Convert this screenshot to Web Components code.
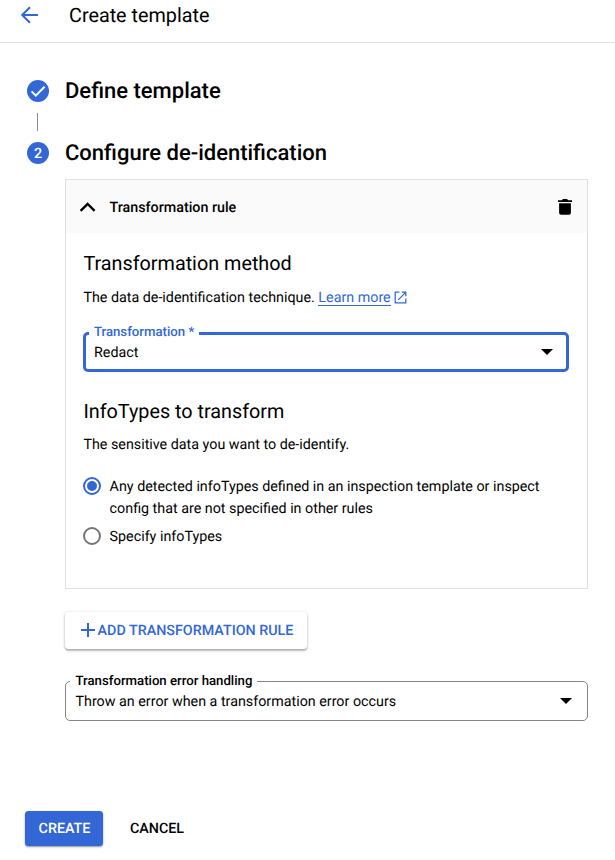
<!DOCTYPE html>
<html lang="en">
<head>
<meta charset="utf-8">
<title>Create template</title>
<style>
  html, body { margin: 0; height: 100%; background: #fff; }
  body {
    --blue: #3367d6;
    --line: #e0e0e0;
    font: 400 14.3px/22px Roboto, "Liberation Sans", sans-serif;
    color: #000;
    text-rendering: geometricPrecision;
    overflow: hidden;
  }
</style>
</head>
<body>
<template-page></template-page>
<script>
const define = (name, html) => {
  const tpl = document.createElement('template');
  tpl.innerHTML = html;
  customElements.define(name, class extends HTMLElement {
    constructor() {
      super();
      this.attachShadow({ mode: 'open' }).append(tpl.content.cloneNode(true));
    }
  });
};

define('page-header', `
<style>
  :host { display: flex; align-items: center; gap: 31px; box-sizing: border-box; height: 43px;
    padding: 0 20px 12px; border-bottom: 1px solid var(--line); font-size: 19.8px; line-height: 28px; }
  svg { width: 18px; height: 18px; display: block; }
  span { padding-top: 2px; }
</style>
<svg viewBox="0 0 18 18" fill="none" stroke="#3367d6" stroke-width="2"><path d="M18 9H2.2M10 1.2L2.2 9l7.8 7.8"/></svg>
<span><slot></slot></span>`);

define('step-heading', `
<style>
  :host { display: flex; align-items: center; height: 30px; gap: 16px; font-size: 22px; font-weight: 500; line-height: 28px; }
  .dot { width: 22px; height: 22px; border-radius: 50%; background: var(--blue); color: #fff;
    display: grid; place-items: center; font-size: 14.3px; line-height: 22px; flex: none; }
  .text { padding-top: 2px; }
</style>
<span class="dot"><slot name="mark"></slot></span><span class="text"><slot></slot></span>`);

define('rule-panel', `
<style>
  :host { display: block; box-sizing: border-box; border: 1px solid var(--line); height: 410px; }
  header { display: flex; align-items: center; height: 53px; background: #fafafa; padding: 0 15px 0 14px; box-sizing: border-box; font-weight: 500; }
  .chev { width: 16px; height: 10px; margin-right: 13.5px; }
  .bin { width: 14px; height: 16px; margin-left: auto; }
  .title { padding-top: 2px; }
  .body { padding: 18px 18px 0 17.4px; }
</style>
<header>
  <svg class="chev" viewBox="0 0 16 10" fill="none" stroke="#000" stroke-width="2.3"><path d="M.6 8.9L7.6 1.9l7 7"/></svg>
  <span class="title"><slot name="title"></slot></span>
  <svg class="bin" viewBox="0 0 14 16"><path d="M0 1.2h3.9L4.9 0h4.2l1 1.2H14V3H0zM1.1 4.3h11.8v9.4a2 2 0 0 1-2 2H3.1a2 2 0 0 1-2-2z"/></svg>
</header>
<div class="body"><slot></slot></div>`);

define('section-title', `
<style>:host { display: block; font-size: 19.8px; line-height: 26px; }</style><slot></slot>`);

define('doc-link', `
<style>
  :host { display: inline-flex; align-items: center; color: var(--blue); gap: 3px; height: 22px; vertical-align: top; }
  span { line-height: 16px; height: 15px; border-bottom: 1px solid var(--blue); }
  svg { width: 13px; height: 13px; margin-bottom: 2px; }
</style>
<span><slot></slot></span>
<svg viewBox="0 0 13 13" fill="none" stroke="#3367d6" stroke-width="1.25"><path d="M5.4 1.2H1.2v10.6h10.6V7.6M7.8 1.2h4v4M11.7 1.4L4.2 8.9"/></svg>`);

define('select-field', `
<style>
  :host { display: flex; position: relative; box-sizing: border-box; align-items: center; justify-content: space-between;
    height: 39.5px; border: 1px solid #80868b; border-radius: 5px; padding: 1px 15px 0 9.5px; }
  :host([focused]) { border: 3px solid var(--blue); padding: 0 13.5px 0 7.6px; }
  .label { position: absolute; left: 4px; top: -10px; height: 20px; line-height: 20px; padding: 0 4.5px 0 5.5px;
    background: #fff; font-size: 13.2px; font-weight: 500; white-space: nowrap; }
  :host([focused]) .label { left: 2.5px; top: -12px; color: var(--blue); padding: 0 5px; }
  .value { padding-top: 2px; line-height: 20px; }
  svg { width: 12px; height: 6px; }
</style>
<span class="label"><slot name="label"></slot></span>
<span class="value"><slot></slot></span>
<svg viewBox="0 0 12 6"><path d="M0 0h12L6 6z"/></svg>`);

define('radio-option', `
<style>
  :host { display: flex; gap: 8.6px; }
  i { width: 18px; height: 18px; margin: 1px 0 0 -.4px; box-sizing: border-box; border: 2px solid #757575; border-radius: 50%; flex: none; display: grid; place-items: center; }
  :host([checked]) i { border-color: var(--blue); }
  :host([checked]) i::after { content: ""; width: 10px; height: 10px; border-radius: 50%; background: var(--blue); }
</style>
<i></i><span><slot></slot></span>`);

define('push-button', `
<style>
  :host { display: inline-flex; align-items: center; justify-content: center; gap: 3px; box-sizing: border-box; border-radius: 3.5px;
    font-weight: 500; white-space: nowrap; height: 36px; }
  :host([kind=raised]) { color: var(--blue); background: #fff; padding-left: 2px; box-shadow: 0 1px 3px rgba(0,0,0,.27), 0 1.5px 1.5px rgba(0,0,0,.17); }
  :host([kind=primary]) { color: #fff; background: var(--blue); padding-left: 1px; box-shadow: 0 1px 2.5px rgba(0,0,0,.3), 0 1px 1px rgba(0,0,0,.15); }
  :host([kind=raised]) .text, :host([kind=primary]) .text { padding-top: 2px; }
</style>
<slot name="icon"></slot><span class="text"><slot></slot></span>`);

define('template-page', `
<style>
  :host { display: block; width: 615px; height: 860px; }
  .steps { padding: 33px 27px 0; }
  .connector { width: 1px; height: 18px; margin: 7px 0 7px 10px; background: #8a8a8a; }
  .content { padding: 11px 0 0 38px; display: flex; flex-direction: column; align-items: stretch; }
  p { margin: 0; }
  .intro { margin-top: 10px; }
  .method { margin: 23px 0 27.5px; }
  .intro2 { margin-top: 9px; margin-bottom: 20px; }
  .second { margin-top: 6px; }
  .add { width: 242px; height: 36.5px; margin: 23px 0 32.5px; align-self: flex-start; }
  .actions { display: flex; padding: 90px 25px 0; gap: 27px; }
  .create { width: 78px; height: 35.5px; }
  svg { display: block; }
</style>
<page-header>Create template</page-header>
<main class="steps">
  <step-heading><svg slot="mark" width="22" height="22" viewBox="0 0 22 22" fill="none" stroke="#fff" stroke-width="2"><path d="M4.6 11.4l4.2 4.2 8.8-8.8"/></svg>Define template</step-heading>
  <div class="connector"></div>
  <step-heading><span slot="mark" style="padding-top:1px">2</span>Configure de-identification</step-heading>
  <div class="content">
    <rule-panel>
      <span slot="title">Transformation rule</span>
      <section-title>Transformation method</section-title>
      <p class="intro">The data de-identification technique. <doc-link>Learn more</doc-link></p>
      <select-field focused class="method"><span slot="label">Transformation *</span>Redact</select-field>
      <section-title>InfoTypes to transform</section-title>
      <p class="intro2">The sensitive data you want to de-identify.</p>
      <radio-option checked>Any detected infoTypes defined in an inspection template or inspect config that are not specified in other rules</radio-option>
      <radio-option class="second">Specify infoTypes</radio-option>
    </rule-panel>
    <push-button kind="raised" class="add"><svg slot="icon" width="14" height="14" viewBox="0 0 14 14" stroke="#3367d6" stroke-width="2"><path d="M7 0v14M0 7h14"/></svg>ADD TRANSFORMATION RULE</push-button>
    <select-field><span slot="label">Transformation error handling</span>Throw an error when a transformation error occurs</select-field>
  </div>
</main>
<div class="actions">
  <push-button kind="primary" class="create">CREATE</push-button>
  <push-button kind="text">CANCEL</push-button>
</div>`);
</script>
</body>
</html>
